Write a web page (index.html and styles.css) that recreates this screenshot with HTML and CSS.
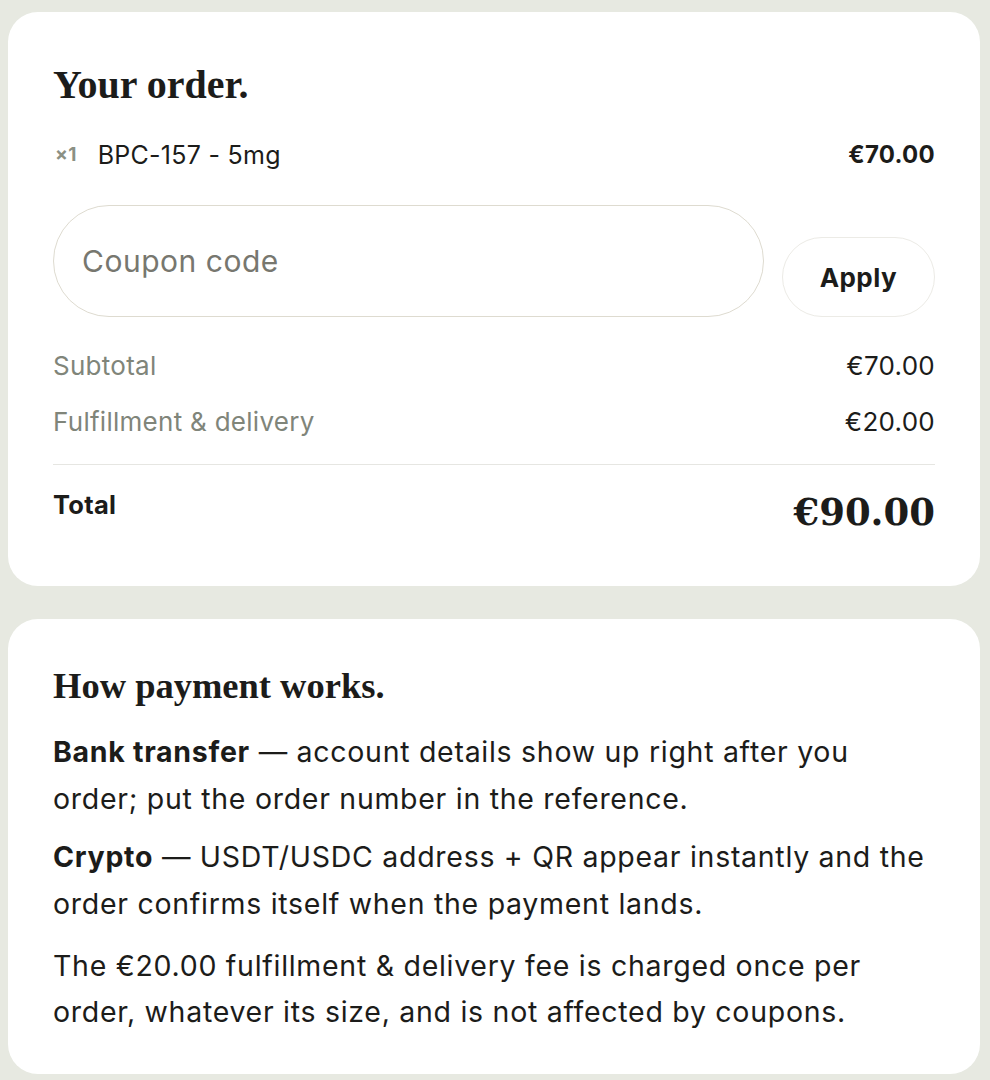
FILE: index.html
```html
<!DOCTYPE html>
<html lang="en">
<head>
<meta charset="utf-8">
<title>Your order</title>
<link rel="stylesheet" href="styles.css">
</head>
<body>
<main class="page">
  <section class="card order">
    <h1 class="title">Your order.</h1>
    <div class="item">
      <div class="item-name"><span class="qty">×1</span><span>BPC-157 - 5mg</span></div>
      <div class="item-price">€70.00</div>
    </div>
    <form class="coupon">
      <input class="coupon-input" type="text" placeholder="Coupon code">
      <button class="apply" type="button">Apply</button>
    </form>
    <div class="line first">
      <span class="label">Subtotal</span>
      <span class="value">€70.00</span>
    </div>
    <div class="line">
      <span class="label">Fulfillment &amp; delivery</span>
      <span class="value">€20.00</span>
    </div>
    <div class="total">
      <span class="total-label">Total</span>
      <span class="total-value">€90.00</span>
    </div>
  </section>

  <section class="card info">
    <h2 class="subtitle">How payment works.</h2>
    <p class="para"><strong>Bank transfer</strong> — account details show up right after you order; put the order number in the reference.</p>
    <p class="para"><strong>Crypto</strong> — USDT/USDC address + QR appear instantly and the order confirms itself when the payment lands.</p>
    <p class="para last">The €20.00 fulfillment &amp; delivery fee is charged once per order, whatever its size, and is not affected by coupons.</p>
  </section>
</main>
</body>
</html>
```

FILE: styles.css
```css
* { box-sizing: border-box; }

html, body {
  margin: 0;
  padding: 0;
  background: #e7e9e1;
}

body {
  font-family: Inter, "Noto Sans", sans-serif;
  color: #1c1c1a;
  letter-spacing: 0.017em;
}

.page {
  display: flex;
  flex-direction: column;
  gap: 33px;
  padding: 12px 10px 0 8px;
}

.card {
  background: #ffffff;
  border-radius: 30px;
  padding: 50px 45px 52px 45px;
}

.title {
  margin: 0;
  font-family: "Liberation Serif", "Times New Roman", serif;
  font-weight: 700;
  font-size: 40px;
  line-height: 46px;
  color: #1c1c1a;
  letter-spacing: 0;
}

.item {
  display: flex;
  justify-content: space-between;
  align-items: center;
  margin-top: 32px;
  height: 30px;
}

.item-name {
  display: flex;
  align-items: center;
  gap: 21px;
  font-size: 25px;
  line-height: 30px;
}

.qty {
  font-size: 19px;
  font-weight: 700;
  color: #8b9084;
  padding-left: 2px;
}

.item-price {
  font-size: 24px;
  font-weight: 700;
  line-height: 30px;
}

.coupon {
  display: flex;
  align-items: flex-end;
  gap: 18px;
  margin: 35px 0 0;
}

.coupon-input {
  flex: 1;
  min-width: 0;
  height: 112px;
  border: 1.5px solid #dedbd0;
  border-radius: 56px;
  padding: 0 28px;
  font-family: Inter, "Noto Sans", sans-serif;
  font-size: 30px;
  letter-spacing: 0.017em;
  color: #1c1c1a;
  background: #fff;
  outline: none;
}

.coupon-input::placeholder {
  color: #77776f;
}

.apply {
  height: 80px;
  padding: 0 37px;
  border: 1.5px solid #ecebe6;
  border-radius: 40px;
  background: #fff;
  font-family: Inter, "Noto Sans", sans-serif;
  font-size: 26px;
  letter-spacing: 0.017em;
  font-weight: 700;
  color: #1c1c1a;
}

.line {
  display: flex;
  justify-content: space-between;
  align-items: center;
  font-size: 26px;
  line-height: 32px;
  margin-top: 24px;
}

.line.first {
  margin-top: 33px;
}

.label {
  color: #80857a;
}

.value {
  color: #1c1c1a;
}

.total {
  display: flex;
  justify-content: space-between;
  align-items: flex-start;
  margin-top: 26px;
  padding-top: 25px;
  border-top: 1px solid #e6e6e2;
}

.total-label {
  font-size: 25.5px;
  font-weight: 700;
  line-height: 30px;
}

.total-value {
  font-family: "DejaVu Serif", "Liberation Serif", serif;
  font-weight: 700;
  font-size: 37px;
  line-height: 44px;
  letter-spacing: 0;
}

.info {
  padding: 46px 45px 39px 45px;
}

.subtitle {
  margin: 0 0 21px;
  font-family: "Liberation Serif", "Times New Roman", serif;
  font-weight: 700;
  font-size: 36.5px;
  line-height: 42px;
  letter-spacing: 0;
  color: #1c1c1a;
}

.para {
  margin: 0 0 11px;
  font-size: 28.5px;
  letter-spacing: 0.025em;
  line-height: 47px;
  color: #1c1c1a;
}

.para strong {
  font-weight: 700;
}

.para.last {
  margin: 16px 0 0;
  line-height: 46px;
}
```
